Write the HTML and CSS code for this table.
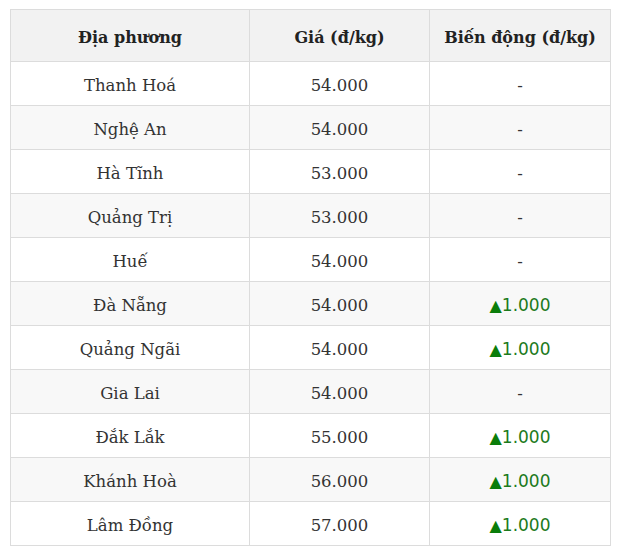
FILE: index.html
```html
<!DOCTYPE html>
<html lang="vi">
<head>
<meta charset="utf-8">
<link rel="stylesheet" href="styles.css">
</head>
<body>
<div class="wrap">
<table class="price">
  <colgroup><col class="c1"><col class="c2"><col class="c3"></colgroup>
  <thead>
    <tr><th>Địa phương</th><th>Giá (đ/kg)</th><th>Biến động (đ/kg)</th></tr>
  </thead>
  <tbody>
    <tr><td>Thanh Hoá</td><td>54.000</td><td>-</td></tr>
    <tr><td>Nghệ An</td><td>54.000</td><td>-</td></tr>
    <tr><td>Hà Tĩnh</td><td>53.000</td><td>-</td></tr>
    <tr><td>Quảng Trị</td><td>53.000</td><td>-</td></tr>
    <tr><td>Huế</td><td>54.000</td><td>-</td></tr>
    <tr><td>Đà Nẵng</td><td>54.000</td><td><span class="up"><span class="tri">▲</span>1.000</span></td></tr>
    <tr><td>Quảng Ngãi</td><td>54.000</td><td><span class="up"><span class="tri">▲</span>1.000</span></td></tr>
    <tr><td>Gia Lai</td><td>54.000</td><td>-</td></tr>
    <tr><td>Đắk Lắk</td><td>55.000</td><td><span class="up"><span class="tri">▲</span>1.000</span></td></tr>
    <tr><td>Khánh Hoà</td><td>56.000</td><td><span class="up"><span class="tri">▲</span>1.000</span></td></tr>
    <tr><td>Lâm Đồng</td><td>57.000</td><td><span class="up"><span class="tri">▲</span>1.000</span></td></tr>
  </tbody>
</table>
</div>
</body>
</html>
```
FILE: styles.css
```css
html, body { margin: 0; padding: 0; background: #fff; }
.wrap { padding: 9px 10px 0 10px; }
.price {
  border-collapse: collapse;
  width: 600px;
  table-layout: fixed;
  font-family: "DejaVu Serif", serif;
  font-size: 16.5px;
  color: #333;
}
.c1 { width: 239px; }
.c2 { width: 180px; }
.c3 { width: 181px; }
.price th, .price td {
  border: 1px solid #dcdcdc;
  text-align: center;
  padding: 3px 0 0 0;
}
.price th {
  height: 48px;
  background: #f2f2f2;
  font-weight: bold;
  font-size: 16px;
  color: #222;
}
.price td { height: 40px; }
.price tbody tr:nth-child(even) td { background: #f8f8f8; }
.up {
  font-family: "DejaVu Sans", sans-serif;
  color: #1c7a1c;
  font-size: 17px;
}
.tri { color: #0a7d0a; font-size: 16px; }
```
